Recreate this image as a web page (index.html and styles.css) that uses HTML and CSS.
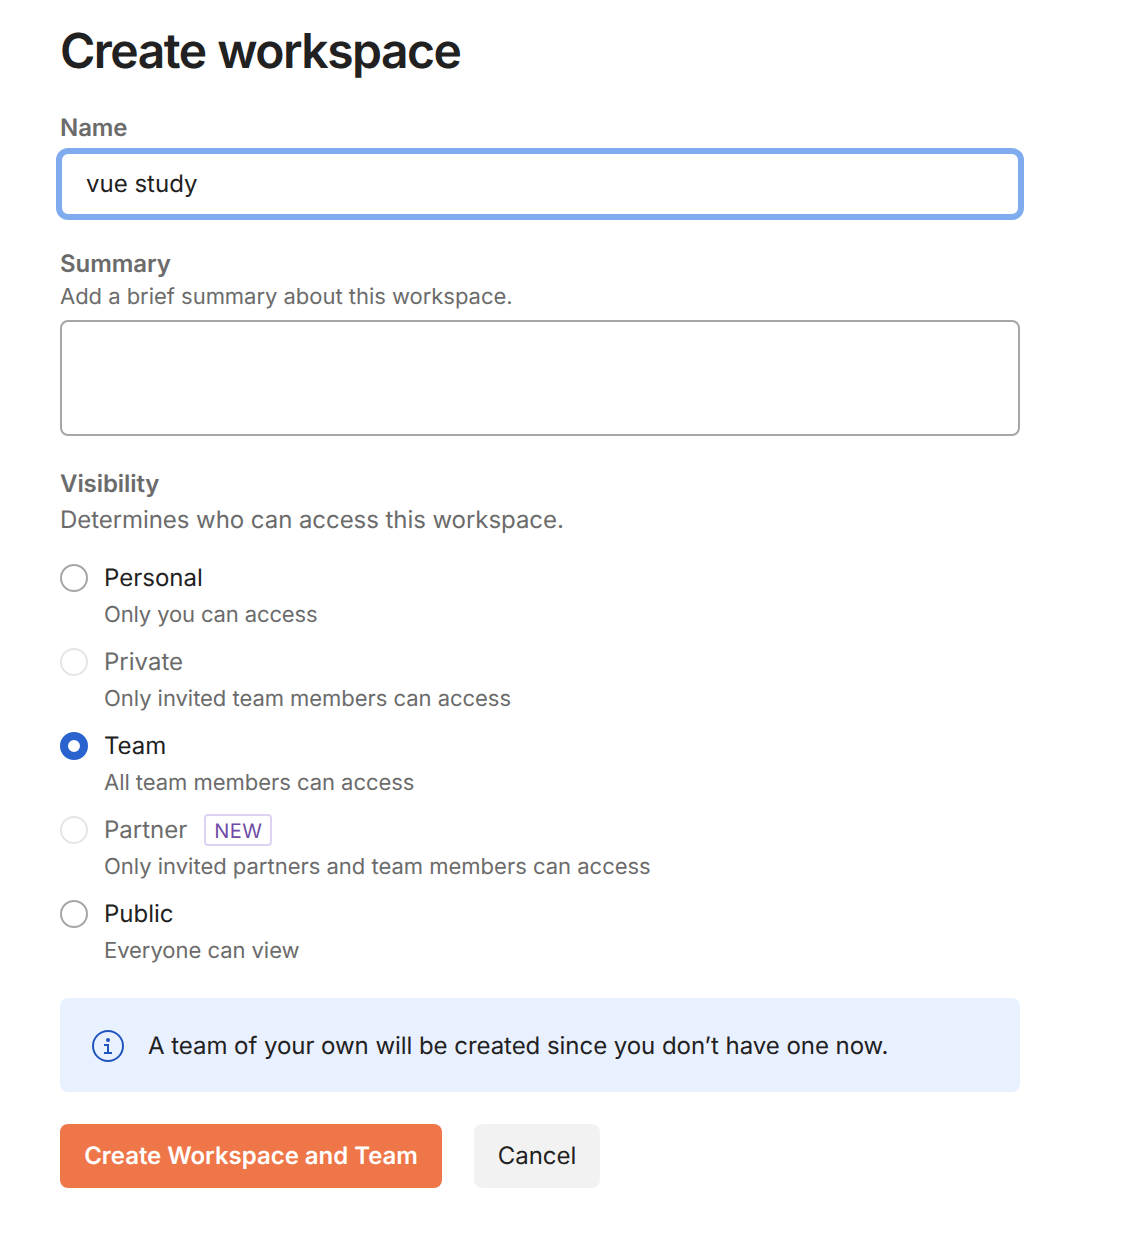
FILE: index.html
```html
<!DOCTYPE html>
<html lang="en">
<head>
<meta charset="utf-8">
<title>Create workspace</title>
<link rel="stylesheet" href="styles.css">
</head>
<body>
<form class="form">
  <h1 class="title">Create workspace</h1>
  <label class="label" for="name">Name</label>
  <input class="name" id="name" type="text" value="vue study">
  <label class="label label-summary" for="summary">Summary</label>
  <p class="help">Add a brief summary about this workspace.</p>
  <textarea class="summary" id="summary"></textarea>
  <h2 class="label label-visibility">Visibility</h2>
  <p class="intro">Determines who can access this workspace.</p>
  <div class="options">
    <div class="option"><span class="radio"></span><div class="option-text"><div class="option-name"><span>Personal</span></div><p class="option-help help-personal">Only you can access</p></div></div>
    <div class="option disabled"><span class="radio"></span><div class="option-text"><div class="option-name"><span>Private</span></div><p class="option-help">Only invited team members can access</p></div></div>
    <div class="option checked"><span class="radio"></span><div class="option-text"><div class="option-name"><span>Team</span></div><p class="option-help">All team members can access</p></div></div>
    <div class="option disabled"><span class="radio"></span><div class="option-text"><div class="option-name"><span>Partner</span><span class="badge">NEW</span></div><p class="option-help help-partner">Only invited partners and team members can access</p></div></div>
    <div class="option"><span class="radio"></span><div class="option-text"><div class="option-name"><span>Public</span></div><p class="option-help">Everyone can view</p></div></div>
  </div>
  <div class="notice">
    <svg class="info" viewBox="0 0 32 32" width="32" height="32" fill="none" stroke="#2155bd" stroke-width="2"><circle cx="16" cy="16" r="15"/><path d="M12 15h4v8M12 23h8"/><circle cx="16" cy="10" r="2" fill="#2155bd" stroke="none"/></svg>
    <span>A team of your own will be created since you don’t have one now.</span>
  </div>
  <div class="actions">
    <button class="button primary" type="button">Create Workspace and Team</button>
    <button class="button secondary" type="button">Cancel</button>
  </div>
</form>
</body>
</html>
```

FILE: styles.css
```css
* { box-sizing: border-box; margin: 0; }
body { background: #fff; color: #212121; font-family: Inter, "Liberation Sans", sans-serif; font-size: 24px; text-rendering: geometricPrecision; }
.form { width: 1020px; padding: 24px 0 0 60px; }
.title { height: 56px; line-height: 54px; font-size: 48px; font-weight: 600; letter-spacing: -1.5px; word-spacing: 1px; white-space: nowrap; }
.label { display: block; height: 40px; line-height: 40px; margin-top: 28px; color: #6b6b6b; font-size: 24px; font-weight: 600; letter-spacing: -.08px; }
.name { display: block; width: 968px; height: 72px; margin: 0 -4px; padding: 0 24px 2px; border: 6px solid #80acef; border-radius: 12px; outline: 0; background: #fff; color: #212121; font: inherit; text-rendering: inherit; }
.label-summary { margin-top: 24px; }
.help { height: 32px; line-height: 34px; margin-top: -4px; color: #6b6b6b; font-size: 22px; letter-spacing: -.03px; }
.summary { display: block; width: 960px; height: 116px; margin-top: 8px; border: 2px solid #a6a6a6; border-radius: 8px; resize: none; }
.label-visibility { margin-top: 28px; }
.intro { height: 40px; line-height: 40px; margin-top: -4px; color: #6b6b6b; letter-spacing: -.06px; }
.options { margin-top: 18px; }
.option { display: flex; gap: 16px; height: 84px; }
.radio { flex: none; width: 28px; height: 28px; margin-top: 6px; border: 2px solid #a6a6a6; border-radius: 50%; }
.option-name { display: flex; align-items: center; gap: 17px; height: 40px; line-height: 40px; }
.option-help { height: 32px; line-height: 34px; color: #6b6b6b; font-size: 22px; letter-spacing: -.04px; }
.help-personal { letter-spacing: -.13px; }
.help-partner { letter-spacing: -.01px; }
.disabled .radio { border-color: #e6e6e6; }
.disabled .option-name { color: #6b6b6b; }
.checked .radio { border: 8px solid #2a62d0; }
.badge { width: 68px; height: 32px; border: 2px solid #dfd3f3; border-radius: 4px; color: #6f4ba6; font-size: 20px; line-height: 30px; letter-spacing: .4px; text-align: center; }
.notice { display: flex; align-items: center; gap: 24px; height: 94px; margin-top: 20px; padding: 0 32px; border-radius: 8px; background: #e9f0ff; letter-spacing: -.05px; }
.info { flex: none; margin-top: 2px; }
.actions { display: flex; gap: 32px; margin-top: 32px; }
.button { height: 64px; padding: 0 0 2px; border: 0; border-radius: 8px; font: inherit; color: #212121; letter-spacing: -.03px; text-rendering: inherit; }
.primary { width: 382px; background: #ef7648; color: #fff; font-weight: 600; }
.secondary { width: 126px; background: #f2f2f2; }
```
